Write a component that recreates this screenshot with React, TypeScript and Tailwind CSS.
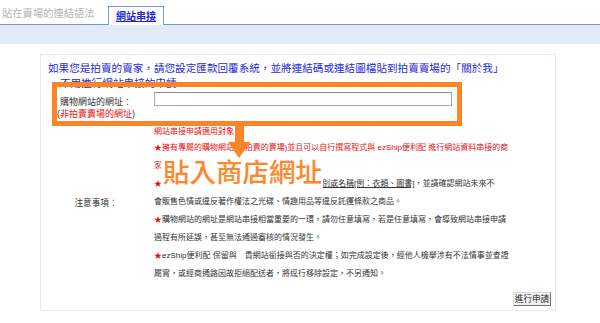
import React from 'react';

const font = { fontFamily: '"Liberation Sans", "Noto Sans CJK TC", sans-serif' };

const Star = () => <span className="text-[#e81010]">★</span>;

const App: React.FC = () => {
    return (
        <div className="relative w-[600px] h-[323px] overflow-hidden bg-white" style={font}>
            {/* 頁籤 */}
            <div className="h-[25px] flex items-end border-b border-[#7094dc]">
                <span className="ml-[2px] w-[106px] pb-[3px] text-[10.3px] leading-[14px] text-[#b4b4b4]">
                    貼在賣場的連結語法
                </span>
                <span className="h-[19px] -mb-px px-[7px] flex items-center bg-white border border-b-0 border-[#7a9ae0] text-[10px] font-bold text-[#2323d8] underline">
                    網站串接
                </span>
            </div>
            <div className="h-[19px] bg-[#e4ebf8]" />

            {/* 申請表 */}
            <div className="mt-[10px] ml-[40px] w-[516px] h-[257px] border border-[#ebe4fa] pl-[7px] pr-[4px] pt-[6px]">
                <div className="text-[10.6px] leading-[15px] text-[#1f2bd6] whitespace-nowrap">
                    <div>如果您是拍賣的賣家，請您設定匯款回覆系統，並將連結碼或連結圖檔貼到拍賣賣場的「關於我」</div>
                    <div className="pl-[12px]">不用進行網站串接的申請</div>
                </div>

                <div className="grid grid-cols-[96px_1fr] gap-x-[10px]">
                    <div className="h-[33px] pt-[5px] text-center text-[9px] leading-[12px]">
                        <div className="text-[#333]">購物網站的網址：</div>
                        <div className="text-[#e81010]">
                            <span className="text-[#333]">(</span>非拍賣賣場的網址<span className="text-[#333]">)</span>
                        </div>
                    </div>
                    <div className="pt-[1px]">
                        <input
                            type="text"
                            className="block w-[298px] h-[14px] border border-[#a9a9a9] border-t-[#8c8c8c] bg-white"
                        />
                    </div>

                    <div className="self-center text-center text-[8.6px] text-[#333]">注意事項：</div>
                    <div className="text-[8px] text-[#333] whitespace-nowrap">
                        <div className="leading-[15px] text-[#e81010]">網站串接申請適用對象：</div>
                        <div className="leading-[18px] text-[#e81010]">
                            ★擁有專屬的購物網站(非拍賣的賣場)並且可以自行撰寫程式與 ezShip便利配 進行網站資料串接的商
                        </div>
                        <div className="leading-[18px] text-[#e81010]">家。</div>
                        <div className="leading-[18px]">
                            <Star />請詳細填寫網站名稱及網站主要販售的商<span className="underline">品類別或名稱[例：衣類、圖書]</span>，並請確認網站未來不
                        </div>
                        <div className="leading-[18px]">會販售色情或違反著作權法之光碟、情趣用品等違反託運條款之商品。</div>
                        <div className="leading-[18px]">
                            <Star />購物網站的網址是網站串接相當重要的一環，請勿任意填寫，若是任意填寫，會導致網站串接申請
                        </div>
                        <div className="leading-[18px]">過程有所延誤，甚至無法通過審核的情況發生。</div>
                        <div className="leading-[18px]">
                            <Star />ezShip便利配 保留與　貴網站銜接與否的決定權；如完成設定後，經他人檢舉涉有不法情事並查證
                        </div>
                        <div className="leading-[18px]">屬實，或經商通路因故拒絕配送者，將逕行移除設定，不另通知。</div>
                    </div>
                </div>

                <div className="flex justify-end mt-[9px]">
                    <button className="w-[38px] h-[14px] flex items-center justify-center bg-[#f3f3f3] border border-[#dcdcdc] border-r-[#6e6e6e] border-b-[#6e6e6e] text-[8.6px] text-[#222]">
                        進行申請
                    </button>
                </div>
            </div>

            {/* 標註 */}
            <div className="absolute left-[52px] top-[82px] w-[410px] h-[44px] border-[5px] border-[#fb8328]" />
            <div
                className="absolute left-[162px] top-[156px] h-[35px] px-[1px] flex items-center bg-white text-[26.5px] leading-none font-medium text-[#fb8a2e] whitespace-nowrap"
                style={{ textShadow: '0 0 1px #fdd' }}
            >
                貼入商店網址
            </div>
            <svg className="absolute left-[226px] top-[126px]" width="26" height="34" viewBox="0 0 26 34">
                <rect x="9" y="0" width="9" height="18" fill="#fb8328" />
                <polygon points="2,16 24,16 13,32" fill="#fb8328" />
            </svg>
        </div>
    );
};

export default App;
